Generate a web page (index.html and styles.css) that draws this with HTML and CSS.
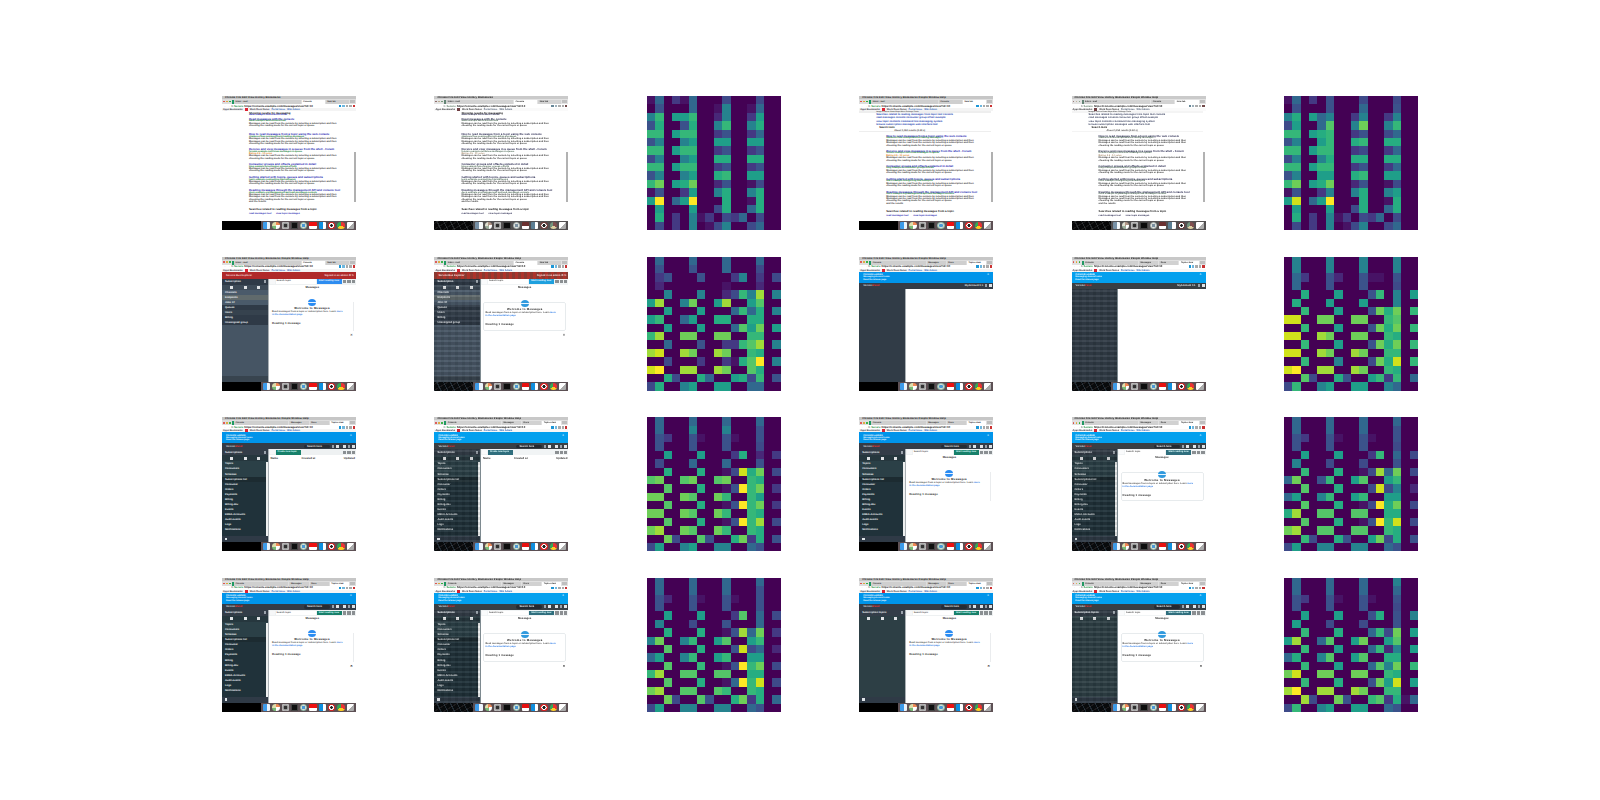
FILE: index.html
```html
<!DOCTYPE html>
<html lang="en">
<head>
<meta charset="utf-8">
<title>Screenshot reconstruction figure</title>
<link rel="stylesheet" href="styles.css">
</head>
<body>
<main class="figure" id="figure"></main>
<script src="script.js"></script>
</body>
</html>
```
FILE: styles.css
```css
* { box-sizing: border-box; margin: 0; padding: 0; }
html, body { background: #fff; }
body { width: 1600px; height: 800px; overflow: hidden; font-family: "Liberation Sans", Arial, sans-serif; }

.figure {
  display: grid;
  grid-template-columns: repeat(6, 134px);
  grid-auto-rows: 134px;
  column-gap: 78.4px;
  row-gap: 26.67px;
  padding: 96px 0 0 222px;
}

/* heat maps */
.heat { display: grid; grid-template-columns: repeat(16, 1fr); grid-template-rows: repeat(16, 1fr); width: 134px; height: 134px; }

/* one screenshot */
.shot { width: 134px; height: 134px; display: flex; flex-direction: column; overflow: hidden; background: #fff; font-size: 3px; line-height: 3px; color: #222; white-space: nowrap; position: relative; text-rendering: geometricPrecision; }
.shot span, .shot p { display: block; }

/* browser chrome */
.titlebar { height: 3px; flex: none; background: #c6c6c6; padding-left: 3px; font-size: 2.6px; color: #111; font-weight: bold; letter-spacing: .1px; }
.tabs { height: 5px; flex: none; background: #dedede; display: flex; align-items: center; gap: 1px; padding: 0 1px; }
.dot { width: 1.6px; height: 1.6px; border-radius: 50%; flex: none; margin-right: .4px; }
.dot.r { background: #e0443e; }
.dot.y { background: #dea123; }
.dot.g { background: #1aab29; }
.tab { flex: 1 1 0; min-width: 0; height: 4px; margin-top: 1px; background: #cfcfcf; color: #333; font-size: 2.2px; line-height: 4px; padding-left: 1.5px; font-weight: bold; }
.tab.on { background: #fff; color: #222; }
.tab.fav { border-left: 2px solid #1f9a63; }
.tab.grow { flex: 3 1 0; }
.tabs .tail { width: 5px; flex: none; height: 3px; background: #bdbdbd; }
.urlbar { height: 4px; flex: none; background: #fff; display: flex; align-items: center; padding: 0 1px 0 2px; gap: 1px; font-size: 2.8px; font-weight: bold; }
.urlbar .nav { color: #777; width: 9px; flex: none; }
.urlbar .sec { color: #1b8a3c; flex: none; }
.urlbar .url { color: #111; flex: 1; }
.ext { width: 2.4px; height: 2.4px; flex: none; }
.ext.b { background: #1c97d8; }
.ext.l { background: #6fb7de; }
.ext.s { background: #aaa; }
.ext.d { background: #c33; }
.bookmarks { height: 3px; flex: none; background: #f4f4f4; display: flex; align-items: center; gap: 2px; padding-left: 1px; font-size: 2.4px; color: #334; font-weight: bold; }
.bookmarks .mark { width: 3px; height: 3px; background: #d23; flex: none; }
.bookmarks .blu { color: #2a62b8; }

/* page area */
.body { flex: 1; min-height: 0; display: flex; background: #fff; }

/* search results */
.serp { flex: 1; min-width: 0; padding-left: 27px; padding-top: 1px; display: flex; flex-direction: column; }
.serp.scrolled { padding-top: 0; }
.gband { height: 2px; line-height: 2px; flex: none; background: #eee; margin-left: -27px; padding-left: 17px; color: #555; font-weight: bold; font-size: 1.9px; }
.rel { margin-left: -10px; height: 3.3px; line-height: 3.3px; font-size: 2.6px; color: #2340b0; font-weight: bold; }
.rel.blk { color: #111; font-weight: bold; padding-left: 3px; height: 3px; }
.sep { height: 3px; margin-left: -27px; border-bottom: .6px solid #eee; padding-left: 35px; color: #444; font-size: 2.4px; font-weight: bold; margin-bottom: 2.8px; line-height: 3px; }
.ln { height: 2.4px; line-height: 2.4px; font-size: 2.4px; color: #333; font-weight: bold; }
.ln.t { font-size: 2.9px; color: #1a1ab0; }
.ln.u { color: #0a7a2c; }
.ln.o { color: #e0841a; }
.ln.k { color: #111; font-size: 2.8px; }
.ln.lk { color: #1a1ab0; }
.ln.head { margin-bottom: 1px; }
.ln.tail { margin-top: 2.6px; }
.res.m6 { margin-bottom: 6px; }
.res.m3 { margin-bottom: 3px; }
.res.m34 { margin-bottom: 3.4px; }
.res.m46 { margin-bottom: 4.6px; }
.vs { width: 2px; flex: none; margin-right: .4px; display: flex; flex-direction: column; }
.vs i { display: block; }
.vs .a { height: 41px; }
.vs .b { height: 50px; background: #b0b0b0; }

/* app bars */
.redbar { height: 7px; flex: none; background: #b02a2a; display: flex; align-items: center; padding: 0 2px 0 4px; color: #f2d8d8; font-size: 2.6px; font-weight: bold; justify-content: space-between; }
.banner { height: 11px; flex: none; background: #0094ea; padding: 1.5px 4px; color: #e8f6ff; display: flex; justify-content: space-between; font-weight: bold; font-size: 2.6px; line-height: 3px; }
.banner small { display: block; font-size: 2.2px; line-height: 2.4px; font-weight: bold; }
.banner .x { color: #bfe6ff; }
.darkbar { height: 6px; flex: none; background: #343c47; display: flex; align-items: center; justify-content: flex-end; padding: 0 1px 0 4px; gap: 2px; color: #e6e6e6; font-size: 2.6px; font-weight: bold; }
.logo { margin-right: auto; color: #cfd3d7; }
.logo b { color: #e33; }
.pill { background: #262c34; border-radius: 2px; padding: 0 3px; height: 3.4px; line-height: 3.4px; width: 26px; }
.wid { flex: none; }
.ico { width: 3px; height: 3px; background: #dfe2e5; flex: none; }
.ico.thin { width: 2px; background: #9aa2ab; }

/* sidebars */
.side { width: 46.5px; flex: none; display: flex; flex-direction: column; border-right: 1.5px solid #aab0b4; color: #eef2f4; font-size: 2.6px; font-weight: bold; background: #465564; min-height: 0; position: relative; }
.side.dark { background: #313c47; }
.side.teal { background: #20323a; }
.side.slate { background: #2d3f45; }
.srow { height: 5px; flex: none; display: flex; justify-content: space-between; align-items: center; padding: 0 2px 0 3px; }
.srow.hd { background: #2f3a47; height: 6px; }
.srow.tb { height: 5px; background: #3e4b58; justify-content: space-around; }
.srow.ch { background: #4a5a6a; }
.srow.sel { background: #606a6c; }
.srow.ds { background: #2f3a47; }
.srow.dl { background: #36424e; }
.srow.gp { background: #2b4047; height: 5.1px; }
.srow.se { background: #1c2b31; height: 5px; }
.srow.it { background: #20323a; height: 5.1px; }
.srow.tt { height: 6px; background: #26373e; justify-content: space-around; }
.srow.tn { background: #2d3f45; height: 6px; justify-content: space-around; }
.srow.hs { background: #333d48; height: 6px; }
.fill { flex: 1; min-height: 0; }
.footr { height: 6px; flex: none; background: #2f3a46; padding: 1.5px 3px; }
.footr i { display: block; width: 2.4px; height: 2.4px; background: #dfe4e8; }
.footr.wide { background: #38444f; }
.strack { position: absolute; right: 0; top: 13px; bottom: 6px; width: 2px; background: #eef0f0; }

/* message pane */
.pane { flex: 1; min-width: 0; display: flex; flex-direction: column; }
.tool { height: 6px; flex: none; display: flex; align-items: center; background: #eef1f2; padding: 0 1px; gap: 1px; }
.tool .sq { width: 5px; height: 4px; background: #f6f7f8; flex: none; }
.inp { flex: 1; height: 4.4px; background: #fff; font-size: 2.4px; line-height: 4.4px; padding-left: 1px; color: #555; font-weight: bold; }
.btn { height: 4.4px; line-height: 4.4px; font-size: 2.4px; font-weight: bold; color: #dff; padding-left: 2px; flex: none; width: 25px; }
.btn.blue { background: #2d8cf0; color: #eaf4ff; }
.btn.grn { background: #17806a; }
.tool .ti { width: 3.4px; height: 3.4px; background: #8a8f92; flex: none; }
.ttl { text-align: center; height: 5px; line-height: 5px; font-size: 2.8px; font-weight: bold; color: #333; flex: none; }
.card { margin: 12px 2px 0 2.5px; height: 29px; flex: none; border-right: 1px solid #eaecee; display: flex; flex-direction: column; }
.circ { width: 8px; height: 7px; border-radius: 50%; background: #2b8cf2; margin: -2.5px auto 0; flex: none; position: relative; }
.circ::after { content: ""; display: block; position: absolute; left: 0; right: 0; top: 3px; height: 1px; background: #e6f2ff; }
.wel { text-align: center; font-size: 2.9px; font-weight: bold; color: #222; height: 4px; line-height: 5px; letter-spacing: .25px; flex: none; }
.dsc { font-size: 2.4px; color: #555; height: 3px; line-height: 3px; padding-left: 1px; font-weight: bold; }
.dsc b { color: #2a78e4; }
.rdg { font-size: 2.9px; font-weight: bold; color: #333; padding: 6px 0 0 1px; height: 9px; line-height: 3px; letter-spacing: .1px; }
.glyph { align-self: flex-end; margin: 3px 3px 0 0; width: 3px; height: 3px; color: #333; font-size: 3.4px; line-height: 3px; }
.glyph.dk { color: #111; font-weight: bold; }
.thead { display: flex; justify-content: space-between; padding: 1.5px 1px 0 2px; font-size: 2.8px; font-weight: bold; color: #333; height: 6px; line-height: 3px; }
.thead span:nth-child(1) { width: 31px; }
.thead span:nth-child(2) { flex: 1; }
.mid { flex: 1; }

/* dock */
.dock { height: 9px; flex: none; display: flex; background: #5d5054; }
.dock .void { width: 39px; background: #000; flex: none; }
.icons { flex: 1; display: flex; align-items: center; gap: 2px; padding-left: 2px; overflow: hidden; }
.app { width: 7.3px; height: 7.3px; flex: none; border-radius: 1px; }
.a1 { background: linear-gradient(90deg, #3d9bea 50%, #e9f2fa 50%); }
.a2 { background: conic-gradient(#e85 0 25%, #fff 0 50%, #7b7 0 75%, #dda 0); border-radius: 50%; }
.a3 { background: radial-gradient(#333 30%, #888 35%, #bbb 70%); }
.a4 { background: #111; border: 1px solid #444; }
.a5 { background: radial-gradient(#4a9ad4 30%, #d8e0d8 40%, #6a9a8a 75%); border-radius: 50%; }
.a6 { background: linear-gradient(#e11 55%, #fff 55%); }
.a7 { background: linear-gradient(90deg, #0d8fe0 55%, #fff 55%); }
.a8 { background: radial-gradient(#222 25%, #fff 30%, #fff 45%, #d22 50%); border-radius: 50%; }
.a9 { background: conic-gradient(#e33 0 33%, #fc2 0 66%, #3a5 0); border-radius: 50%; }
.a10 { background: linear-gradient(135deg, #fff 55%, #aaa 55%); }
.a11 { background: #ddd; width: 4px; }

/* reconstruction look */
.recon { filter: blur(.42px) saturate(.95) contrast(1.03); }
.recon .dock .void { background:
  repeating-linear-gradient(63deg, rgba(90,120,140,.3) 0 1px, transparent 1px 6px),
  repeating-linear-gradient(-31deg, rgba(70,60,60,.35) 0 1px, transparent 1px 5px),
  #0b0d10; }
.recon .side::after { content: ""; position: absolute; inset: 0; background:
  repeating-linear-gradient(0deg, rgba(255,255,255,.05) 0 2.5px, rgba(0,0,0,.09) 2.5px 5px),
  repeating-linear-gradient(90deg, rgba(0,0,0,.04) 0 3px, rgba(255,255,255,.02) 3px 7px); }
.recon .card { border: 1px solid #e4e8ea; border-radius: 2px; }
.recon .redbar { background: repeating-linear-gradient(90deg, #8e3a32 0 3px, #b0342c 3px 6px); }
.recon .banner { background: #00a0f0; }
.recon .darkbar { background: #3b4146; }
.recon .side { border-right-color: #7e8a90; }
.recon.serpshot { filter: blur(.42px) saturate(.25) contrast(1.05); }
.recon .btn.grn { background: #2f6f7e; }
.recon .btn.blue { background: #1ba0e0; }
.recon .circ { background: #2f9adf; }
```
FILE: script.js
```js
const heatRamp = ["#440154","#471365","#482878","#443983","#3e4a89","#3b528b","#31688e","#26828e","#1f9e89","#26ad81","#35b779","#54c568","#6ece58","#a0da39","#d0e11c","#fde725"];

const heatmaps = {
  h1: ["1603160004000400","0500060017001600","7a088a0027003800","590059007a007900","aa08aa0035003600","5700780088008800","aa08aa0035003500","4700780099009900","aa08aa0035003500","570078009a008800","ac089c0025001400","1500380079007900","8f068f0009001900","0800080049006900","0903071304360400","0403070147004600"],
  h2: ["1603050004000400","0500050006000500","7908670037003700","48006b007c007a00","aa089a0035004600","57008a009a009900","aa08aa0034003600","4700790099009900","aa08aa0035003600","570088009a008800","ac089c0025001400","1500370079007800","8e068f0009001900","0800080049006900","0903071304360400","0403070147004600"],
  h3: ["0600060006000600","0500050006000400","0350005000370304","0200000001000200","00700070024a7d07","8d007c008d008b00","00800080006a6907","8a00680099009900","00800080006b8c08","ad00cc00cc00aa00","00600050033abd07","de00dc00dc00a900","004000300319bf07","ef00dd00dc00b900","0094009600894a05","4900780088006600"],
  h4: ["0700070007000700","0700070007000700","0630052005110500","0600050005000400","00900080005a0708","0900080008000700","00a00080005c9c0a","ee00cc00cc00ab00","00a00080005c9c0a","ee00dc00cc00a900","00a00080005c9c0a","ee00dc00dc00aa00","00a00070004c9e0a","ef00dd00dc00a900","00b40095008a3a06","4a00780088007600"],
  h5: ["0600060006000600","0600070007000500","0530051005100500","0500050005000400","0080008000390203","0400060006000500","00900090014e9c04","bc00bc00bc00a900","00b00090015fac03","cc00cb00ca00a800","00b00090015fac03","cc00cb00ca00a900","00b00090015fad04","cd00cb00ca00a900","00c400b5009c3905","4800780077006500"],
  h6: ["0600060006000600","0600060006000500","0530051005100500","0500050005000400","00800080003a0604","0700040004000500","00a00090014d6c04","6c005a008b008a00","00b00090004e4702","68007a008a008800","00b00090014f9c04","9d00bb00bb009900","00b00090015fae04","cd00bb00bb00a900","00a40095008c4905","4800770077006500"],
  h7: ["0600060006000600","0600060006000500","0520051005100500","0500050005000500","00800080003b0604","0700040005000600","00900090015d6c03","7c007a008b008a00","00b00090005e4602","68007a008a008800","00b000a0015fac04","ad00bb00bb009900","00b00090016fae04","cd00bb00ba00a900","00c400b5009c3906","4800770077006500"],
  h8: ["0600060006000700","0600060006000600","0530051005100500","0500050005000400","0080008000590507","0800040004000500","00a00090006a4c08","8d006b008c008b00","00a00080006a2708","69007b008b009900","00a00080006b7c0a","ce00cc00cc00a900","00a00090005c8e08","df00dd00dc00aa00","00d400c500ab3916","4a00780088006500"]
};

function heat(key) {
  let out = '<div class="heat">';
  for (const c of heatmaps[key].join("")) out += `<div style="background:${heatRamp[parseInt(c, 16)]}"></div>`;
  return out + "</div>";
}

function chrome(opts) {
  const tabs = (opts.tabs || ["Inbox - mail","Console","New tab"]).map((t, i) =>
    `<span class="tab ${i === opts.active ? "on" : ""} ${i === 0 ? "fav grow" : ""}">${t}</span>`).join("");
  return `
  <div class="titlebar">${opts.title || "Chrome File Edit View History Bookmarks People Window Help"}</div>
  <div class="tabs"><span class="dot r"></span><span class="dot y"></span><span class="dot g"></span>${tabs}<span class="tail"></span></div>
  <div class="urlbar"><span class="nav">&#8592; &#8594; C</span><span class="sec">Secure</span><span class="url">https://console.example.com/messages/view?id=10</span><span class="ext b"></span><span class="ext l"></span><span class="ext s"></span><span class="ext s"></span><span class="ext d"></span></div>
  <div class="bookmarks"><span>Apps Bookmarks</span><span class="mark"></span><span>Work Docs Notes</span><span class="blu">Portal Issue</span><span class="blu">Wiki Admin</span></div>`;
}

function dock() {
  let apps = "";
  for (let i = 1; i <= 11; i++) apps += `<span class="app a${i}"></span>`;
  return `<div class="dock"><span class="void"></span><div class="icons">${apps}</div></div>`;
}

const d1 = "Messages can be read from the console by selecting a subscription and then";
const d2 = "choosing the reading mode for the current topic or queue";
const d3 = "and the results";

const resultData = [
  { m: "m3", t: "How to read messages from a topic using the web console", u: "stackoverflow.com/questions/reading-messages", ds: [d1, d1, d2] },
  { m: "m3", t: "Receive and view messages in a queue from the shell - Forum", u: "forums.example.net/t/view-messages-in-queue", o: "Rating 4.5 - 12 votes", ds: [d1, d2] },
  { m: "m34", t: "Consumer groups and offsets explained in detail", u: "blog.example.io/consumer-groups-offsets", ds: [d1, d2] },
  { m: "m34", t: "Getting started with topics, queues and subscriptions", u: "learn.example.com/getting-started/topics", ds: [d1, d2] },
  { m: "m46", t: "Reading messages through the management API and console tool", u: "docs.example.org/management-api/read-messages-console", ds: [d1, d1, d2, d3] }
];

function result(r) {
  const lines = r.ds.map(d => `<p class="ln">${d}</p>`).join("");
  return `<div class="res ${r.m}"><p class="ln t">${r.t}</p><p class="ln u">${r.u}</p>${r.o ? `<p class="ln o">${r.o}</p>` : ""}${lines}</div>`;
}

function results(scrolled) {
  let out = `<div class="serp ${scrolled ? "scrolled" : ""}">`;
  if (scrolled) {
    out += `<p class="gband">Images Videos News Maps More Settings Tools</p>`;
    out += `<p class="rel">Searches related to reading messages from topic tool console</p><p class="rel">read messages console consumer group offset example</p><p class="rel">view topic contents command line messaging system</p><p class="rel">browse subscription messages web interface tool</p>`;
    out += `<p class="rel blk">Search tools</p><p class="sep">About 1,250 results (0.40 s)</p>`;
  } else {
    out += `<p class="ln k">Showing results for messaging</p><p class="ln lk head">www.example.com/search/results</p>`;
    out += result({ m: "m6", t: "Read messages with the console", u: "www.example.com/console/read", ds: [d1, d2] });
  }
  out += resultData.map(result).join("");
  out += `<p class="ln k">Searches related to reading messages from a topic</p><p class="ln lk tail">read messages tool &nbsp; &nbsp; &nbsp; view topic messages</p></div>`;
  return out + `<div class="vs"><i class="a"></i><i class="b"></i></div>`;
}

function pane(o) {
  let html = `<div class="pane"><div class="tool"><span class="sq"></span>`;
  if (o.table) {
    html += `<span class="btn grn">Create new topic</span><span class="mid"></span><span class="ti"></span><span class="ti"></span><span class="ti"></span></div>`;
    html += `<div class="thead"><span>Name</span><span>Created at</span><span>Updated</span></div></div>`;
    return html;
  }
  html += `<span class="inp">Search topic</span><span class="btn ${o.blue ? "blue" : "grn"}">Start reading now</span><span class="ti"></span><span class="ti"></span><span class="ti"></span></div>`;
  html += `<div class="ttl">Messages</div><div class="card"><span class="circ"></span><p class="wel">Welcome to Messages</p>`;
  html += `<p class="dsc">Read messages from a topic or subscription here. Learn <b>more</b></p><p class="dsc"><b>in the documentation page</b></p>`;
  html += `<p class="rdg">Reading 1 message</p></div>`;
  if (o.glyph) html += `<span class="glyph ${o.glyph}">&#10005;</span>`;
  return html + `</div>`;
}

const tealRows = [["gp","Topics"],["gp","Consumers"],["gp","Schemas"],["se","Subscriptions list"],["it","Consumer"],["it","Orders"],["it","Payments"],["it","Billing"],["it","Billing-dev"],["it","Events"],["it","EMEA-Accounts"],["it","Audit-events"],["it","Logs"],["it","Notifications"]];

function rowsHtml(rows) { return rows.map(r => `<div class="srow ${r[0]}"><span>${r[1]}</span></div>`).join(""); }

const tabsRow = `<div class="srow tb"><i class="ico"></i><i class="ico"></i><i class="ico"></i></div>`;
const appTabs = ["Console","Messages","Docs","Topics view"];
const bannerText = `<div class="banner"><div>Console update<small>Messaging account news</small><small>Read the release page</small></div><span class="x">&#10005;</span></div>`;

function tealSide() {
  return `<aside class="side teal"><div class="srow hs"><span>Subscriptions</span><i class="ico thin"></i></div>
    <div class="srow tt"><i class="ico"></i><i class="ico"></i><i class="ico"></i></div>${rowsHtml(tealRows)}<div class="fill"></div><div class="footr"><i></i></div><span class="strack"></span></aside>`;
}

function bannerBars() {
  return bannerText + `<div class="darkbar"><span class="logo">Version<b>Panel</b></span><span class="pill">Search here</span><i class="ico thin"></i><i class="ico"></i><span></span><i class="ico"></i><i class="ico thin"></i><i class="ico"></i></div>`;
}

function shot(cls, ...parts) { return `<div class="shot ${cls}">${parts.join("")}${dock()}</div>`; }

const screens = {
  serp1: (c) => shot(c + " serpshot", chrome({ active: 1, title: "Chrome File Edit View History Bookmarks" }), `<div class="body">${results(false)}</div>`),
  serp2: (c) => shot(c + " serpshot", chrome({ active: 2 }), `<div class="body">${results(true)}</div>`),
  red: (c) => shot(c, chrome({ active: 1 }), `<div class="redbar"><span>Service Bus Explorer</span><span>Signed in as admin &#9881; &#8635;</span></div>
     <div class="body"><aside class="side"><div class="srow hd"><span>Subscription</span><i class="ico thin"></i></div>${tabsRow}
     ${rowsHtml([["ch","Channels"],["sel","Endpoints"],["ch","Jobs 12"],["ds","Queues"],["dl","Users"],["ds","Billing"],["ds","Unassigned group"]])}
     <div class="fill"></div><div class="footr wide"></div></aside>${pane({ blue: true, glyph: "nm" })}</div>`),
  blank: (c) => shot(c, chrome({ active: 3, tabs: appTabs }), bannerText + `<div class="darkbar"><span class="logo">Version<b>Panel</b></span><span class="wid">MyAccount 0 1</span><i class="ico thin"></i><i class="ico"></i></div>
     <div class="body"><aside class="side dark"></aside><div class="pane"></div></div>`),
  table: (c) => shot(c, chrome({ active: 3, tabs: appTabs }), bannerBars(), `<div class="body">${tealSide()}${pane({ table: true })}</div>`),
  welcome: (c) => shot(c, chrome({ active: 3, tabs: appTabs }), bannerBars(), `<div class="body">${tealSide()}${pane({})}</div>`),
  welcome2: (c) => shot(c, chrome({ active: 3, tabs: appTabs }), bannerBars(), `<div class="body">${tealSide()}${pane({ glyph: "dk" })}</div>`),
  empty: (c) => shot(c, chrome({ active: 3, tabs: appTabs }), bannerBars(), `<div class="body"><aside class="side slate"><div class="srow hs"><span>Subscription topics</span><i class="ico thin"></i></div><div class="srow tn"><i class="ico"></i><i class="ico"></i><i class="ico"></i></div><div class="fill"></div><div class="footr"><i></i></div></aside>${pane({ glyph: "dk" })}</div>`)
};

const layout = [
  ["serp1", "h1", "serp2", "h2"],
  ["red", "h3", "blank", "h4"],
  ["table", "h5", "welcome", "h6"],
  ["welcome2", "h7", "empty", "h8"]
];

let html = "";
for (const [a, ha, b, hb] of layout) {
  html += screens[a]("") + screens[a]("recon") + heat(ha) + screens[b]("") + screens[b]("recon") + heat(hb);
}
document.getElementById("figure").innerHTML = html;
```
